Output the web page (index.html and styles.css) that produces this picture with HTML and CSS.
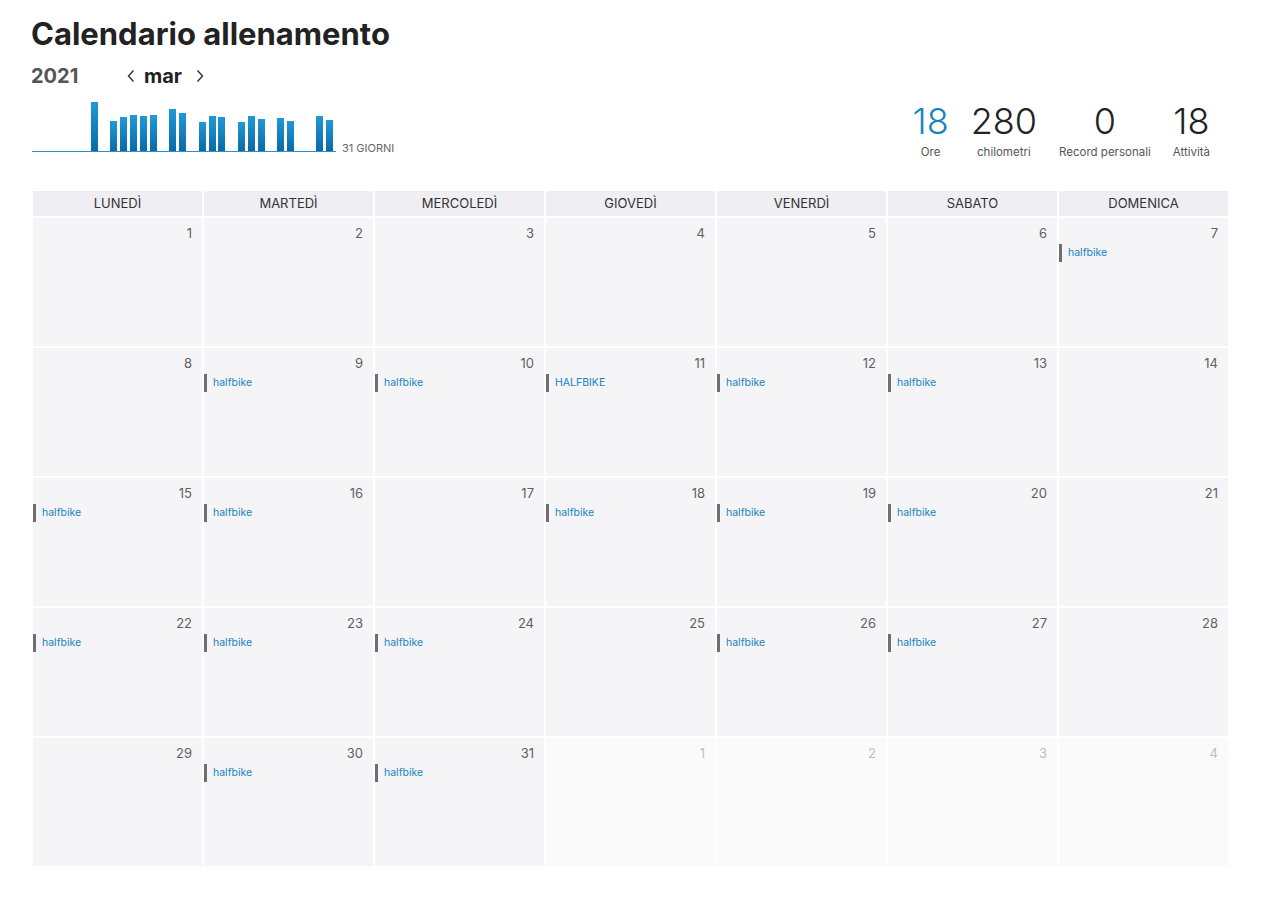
FILE: index.html
```html
<!DOCTYPE html>
<html lang="it">
<head>
<meta charset="utf-8">
<title>Calendario allenamento</title>
<link rel="stylesheet" href="styles.css">
</head>
<body>
<div class="page">
  <header class="top">
    <div class="left">
      <h1 class="title">Calendario allenamento</h1>
      <div class="nav">
        <span class="year">2021</span>
        <span class="arrow">
          <svg width="10" height="14" viewBox="0 0 10 14"><path d="M7.5 1.5 L2.5 7 L7.5 12.5" fill="none" stroke="#333" stroke-width="1.4"/></svg>
        </span>
        <span class="month">mar</span>
        <span class="arrow">
          <svg width="10" height="14" viewBox="0 0 10 14"><path d="M2.5 1.5 L7.5 7 L2.5 12.5" fill="none" stroke="#333" stroke-width="1.4"/></svg>
        </span>
      </div>
      <div class="chart-row">
        <div class="chart">
          <div class="slot"></div><div class="slot"></div><div class="slot"></div><div class="slot"></div><div class="slot"></div><div class="slot"></div>
          <div class="slot"><div class="bar" style="height:49px"></div></div>
          <div class="slot"></div>
          <div class="slot"><div class="bar" style="height:30px"></div></div>
          <div class="slot"><div class="bar" style="height:34px"></div></div>
          <div class="slot"><div class="bar" style="height:36px"></div></div>
          <div class="slot"><div class="bar" style="height:35px"></div></div>
          <div class="slot"><div class="bar" style="height:36px"></div></div>
          <div class="slot"></div>
          <div class="slot"><div class="bar" style="height:42px"></div></div>
          <div class="slot"><div class="bar" style="height:38px"></div></div>
          <div class="slot"></div>
          <div class="slot"><div class="bar" style="height:29px"></div></div>
          <div class="slot"><div class="bar" style="height:35px"></div></div>
          <div class="slot"><div class="bar" style="height:34px"></div></div>
          <div class="slot"></div>
          <div class="slot"><div class="bar" style="height:29px"></div></div>
          <div class="slot"><div class="bar" style="height:35px"></div></div>
          <div class="slot"><div class="bar" style="height:32px"></div></div>
          <div class="slot"></div>
          <div class="slot"><div class="bar" style="height:33px"></div></div>
          <div class="slot"><div class="bar" style="height:30px"></div></div>
          <div class="slot"></div><div class="slot"></div>
          <div class="slot"><div class="bar" style="height:35px"></div></div>
          <div class="slot"><div class="bar" style="height:31px"></div></div>
        </div>
        <span class="days">31 GIORNI</span>
      </div>
    </div>
    <div class="stats">
      <div class="stat"><div class="num blue">18</div><div class="lbl">Ore</div></div>
      <div class="stat"><div class="num">280</div><div class="lbl">chilometri</div></div>
      <div class="stat"><div class="num">0</div><div class="lbl">Record personali</div></div>
      <div class="stat"><div class="num">18</div><div class="lbl">Attività</div></div>
    </div>
  </header>

  <div class="cal">
    <div class="hd">LUNEDÌ</div>
    <div class="hd">MARTEDÌ</div>
    <div class="hd">MERCOLEDÌ</div>
    <div class="hd">GIOVEDÌ</div>
    <div class="hd">VENERDÌ</div>
    <div class="hd">SABATO</div>
    <div class="hd">DOMENICA</div>

    <div class="cell"><div class="dn">1</div></div>
    <div class="cell"><div class="dn">2</div></div>
    <div class="cell"><div class="dn">3</div></div>
    <div class="cell"><div class="dn">4</div></div>
    <div class="cell"><div class="dn">5</div></div>
    <div class="cell"><div class="dn">6</div></div>
    <div class="cell"><div class="dn">7</div><div class="ev">halfbike</div></div>

    <div class="cell"><div class="dn">8</div></div>
    <div class="cell"><div class="dn">9</div><div class="ev">halfbike</div></div>
    <div class="cell"><div class="dn">10</div><div class="ev">halfbike</div></div>
    <div class="cell"><div class="dn">11</div><div class="ev">HALFBIKE</div></div>
    <div class="cell"><div class="dn">12</div><div class="ev">halfbike</div></div>
    <div class="cell"><div class="dn">13</div><div class="ev">halfbike</div></div>
    <div class="cell"><div class="dn">14</div></div>

    <div class="cell"><div class="dn">15</div><div class="ev">halfbike</div></div>
    <div class="cell"><div class="dn">16</div><div class="ev">halfbike</div></div>
    <div class="cell"><div class="dn">17</div></div>
    <div class="cell"><div class="dn">18</div><div class="ev">halfbike</div></div>
    <div class="cell"><div class="dn">19</div><div class="ev">halfbike</div></div>
    <div class="cell"><div class="dn">20</div><div class="ev">halfbike</div></div>
    <div class="cell"><div class="dn">21</div></div>

    <div class="cell"><div class="dn">22</div><div class="ev">halfbike</div></div>
    <div class="cell"><div class="dn">23</div><div class="ev">halfbike</div></div>
    <div class="cell"><div class="dn">24</div><div class="ev">halfbike</div></div>
    <div class="cell"><div class="dn">25</div></div>
    <div class="cell"><div class="dn">26</div><div class="ev">halfbike</div></div>
    <div class="cell"><div class="dn">27</div><div class="ev">halfbike</div></div>
    <div class="cell"><div class="dn">28</div></div>

    <div class="cell"><div class="dn">29</div></div>
    <div class="cell"><div class="dn">30</div><div class="ev">halfbike</div></div>
    <div class="cell"><div class="dn">31</div><div class="ev">halfbike</div></div>
    <div class="cell other"><div class="dn">1</div></div>
    <div class="cell other"><div class="dn">2</div></div>
    <div class="cell other"><div class="dn">3</div></div>
    <div class="cell other"><div class="dn">4</div></div>
  </div>
</div>
</body>
</html>
```

FILE: styles.css
```css
* { box-sizing: border-box; }
html, body { margin: 0; padding: 0; background: #fff; }
body {
  font-family: "Inter", "Liberation Sans", Arial, sans-serif;
  color: #333;
}
.page {
  padding: 15px 0 0 31px;
  width: 1229px;
}
.top {
  display: flex;
  justify-content: space-between;
  align-items: flex-end;
}
.left { display: flex; flex-direction: column; }
.title {
  margin: 0;
  font-size: 31px;
  font-weight: 700;
  line-height: 38px;
  color: #222;
  letter-spacing: 0;
}
.nav {
  display: flex;
  align-items: center;
  height: 26px;
  margin-top: 10px;
}
.year {
  font-size: 20px;
  font-weight: 700;
  color: #555;
  width: 95px;
}
.arrow { display: flex; align-items: center; width: 17px; }
.month {
  font-size: 20px;
  font-weight: 700;
  color: #222;
  margin: 0 13px 0 1px;
}
.chart-row {
  display: flex;
  align-items: flex-end;
  margin-top: 11px;
  margin-left: 1px;
}
.chart {
  display: grid;
  grid-template-columns: repeat(31, 1fr);
  width: 304px;
  height: 52px;
  align-items: end;
  border-bottom: 1px solid #2a8fcc;
}
.slot { display: flex; align-items: flex-end; height: 100%; }
.bar {
  width: 7px;
  background: linear-gradient(#1f9ad8, #0b6aa5);
}
.days {
  font-size: 11px;
  color: #666;
  margin-left: 6px;
  line-height: 11px;
  margin-bottom: -2px;
}
.stats {
  display: flex;
  gap: 22px;
  margin-right: 19px;
  margin-bottom: -8px;
}
.stat { display: flex; flex-direction: column; align-items: center; }
.num {
  font-size: 36px;
  font-weight: 300;
  line-height: 40px;
  color: #222;
}
.num.blue { color: #1983c2; }
.lbl {
  font-size: 11.5px;
  color: #555;
  line-height: 16px;
  margin-top: 3px;
}
.cal {
  display: grid;
  grid-template-columns: repeat(7, 169px);
  grid-template-rows: 25px repeat(5, 128px);
  gap: 2px;
  margin-top: 39px;
  margin-left: 2px;
}
.hd {
  background: #eeeef3;
  font-size: 13px;
  color: #333;
  text-align: center;
  line-height: 25px;
}
.cell {
  background: #f5f5f8;
  padding-top: 7px;
}
.cell.other { background: #fafafb; }
.dn {
  text-align: right;
  padding-right: 10px;
  font-size: 13px;
  line-height: 17px;
  color: #606060;
}
.cell.other .dn { color: #bdbdc0; }
.ev {
  margin-top: 2px;
  border-left: 3px solid #6e6e73;
  padding-left: 6px;
  height: 18px;
  line-height: 18px;
  font-size: 10.5px;
  color: #1983c2;
}
```
